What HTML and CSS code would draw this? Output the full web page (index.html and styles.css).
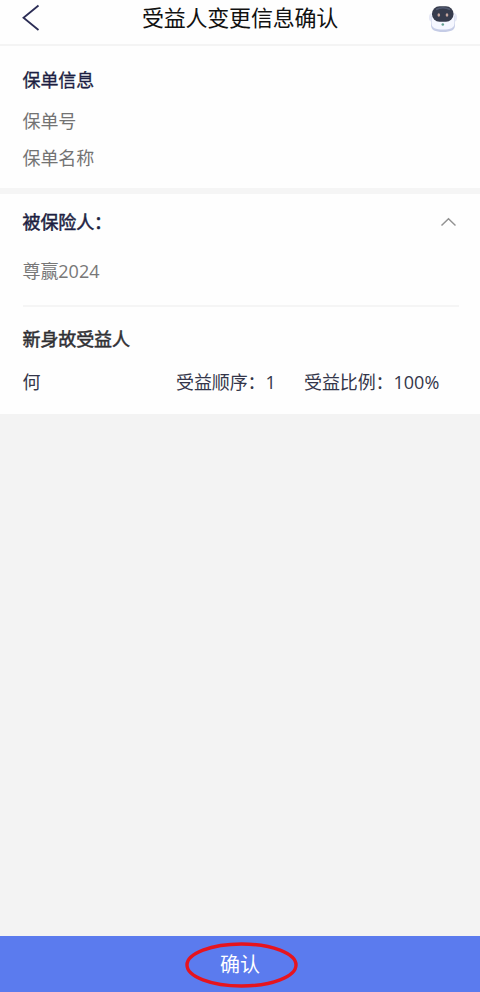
FILE: index.html
```html
<!DOCTYPE html>
<html lang="zh-CN">
<head>
<meta charset="utf-8">
<title>受益人变更信息确认</title>
<link rel="stylesheet" href="styles.css">
</head>
<body>
<div class="page">
  <header class="header">
    <svg class="back" viewBox="0 0 20 28"><path d="M17.500 1.500 2.500 13.700 17.500 26" fill="none" stroke="#2b2d55" stroke-width="1.8"/></svg>
    <h1 class="title">受益人变更信息确认</h1>
    <svg class="robot" viewBox="0 0 30 30">
      <rect x="1" y="10" width="28" height="9" rx="4" fill="#e6e8f5"/>
      <path d="M3 13h24v9c0 5-4 7-12 7S3 27 3 22z" fill="#c5cce6"/>
      <path d="M3.500 11h23v9c0 5-4 6.500-11.500 6.500S3.500 25 3.500 20z" fill="#f5f7ff"/>
      <rect x="4" y="3.300" width="21.500" height="15.500" rx="7.500" fill="#363b4c"/>
      <path d="M8 6.500q7-3.500 14 0" fill="none" stroke="#535b72" stroke-width="1.500"/>
      <ellipse cx="10.800" cy="12" rx="1.300" ry="1.800" fill="#c6a69d"/>
      <ellipse cx="19" cy="12" rx="1.300" ry="1.800" fill="#c6a69d"/>
      <circle cx="14.800" cy="21.500" r="1.300" fill="#62a08f"/>
    </svg>
  </header>
  <section class="policy">
    <h2 class="heading medium">保单信息</h2>
    <p class="label">保单号</p>
    <p class="label">保单名称</p>
  </section>
  <section class="insured">
    <div class="insured-head">
      <h2 class="heading">被保险人：</h2>
      <svg class="chevron" viewBox="0 0 16 10"><path d="M1.500 8.500 8.500 1.700 15.500 8.500" fill="none" stroke="#929292" stroke-width="1.500"/></svg>
    </div>
    <p class="product">尊赢<span class="num">2024</span></p>
    <h2 class="heading dark">新身故受益人</h2>
    <div class="beneficiary">
      <span>何</span>
      <span>受益顺序：<span class="num">1</span></span>
      <span>受益比例：<span class="num">100%</span></span>
    </div>
  </section>
  <main class="blank"></main>
  <button class="confirm">
    <span>确认</span>
    <svg class="ring" viewBox="0 0 114 46"><ellipse cx="57.500" cy="23" rx="54.500" ry="21" fill="none" stroke="#e6141e" stroke-width="3.400"/></svg>
  </button>
</div>
</body>
</html>
```
FILE: styles.css
```css
* { box-sizing: border-box; margin: 0; padding: 0; }

body {
  font: 18px/28px "Noto Sans CJK SC", sans-serif;
  letter-spacing: -0.1px;
  color: #34364a;
  background: #f3f3f3;
}

.page { display: flex; flex-direction: column; height: 992px; }

.header {
  display: flex;
  align-items: flex-start;
  justify-content: space-between;
  height: 46px;
  padding: 3px 22px 0 21px;
  background: #fefefe;
  border-bottom: 2px solid #f4f4f4;
}

.back { width: 20px; height: 28px; margin-top: 1px; }
.title { font-size: 22px; font-weight: 400; letter-spacing: -0.2px; color: #111; margin: -1px 0 0 11px; }
.robot { width: 30px; height: 30px; }

.policy {
  height: 148px;
  padding: 19px 22px 0 22.500px;
  background: #fefefe;
  border-bottom: 6px solid #f5f5f5;
}

.heading { font-size: 18px; font-weight: 400; color: #1d1f42; -webkit-text-stroke: 0.5px currentColor; }
.medium { margin-bottom: 13px; -webkit-text-stroke-width: 0.3px; }
.dark { color: #303034; }
.label { height: 37px; color: #737373; }

.insured { height: 220px; padding: 13px 21px 0 22.500px; background: #fefefe; }
.insured-head { display: flex; justify-content: space-between; }
.chevron { width: 16px; height: 10px; margin: 10px 3px 0 0; }

.product {
  height: 72px;
  margin-bottom: 17px;
  padding-top: 21px;
  color: #777;
  border-bottom: 2px solid #f5f5f5;
}

.num { font-family: "Open Sans", sans-serif; line-height: 1; letter-spacing: 0; }

.beneficiary {
  display: grid;
  grid-template-columns: 153.500px 128px 1fr;
  margin-top: 15px;
}

.blank { flex: 1; background: #f3f3f3; }

.confirm {
  position: relative;
  height: 56px;
  font: 20px/56px "Noto Sans CJK SC", sans-serif;
  color: #fff;
  background: #5b7bee;
  border: 0;
}

.ring { position: absolute; left: 184px; top: 6px; width: 114px; height: 46px; }
```
